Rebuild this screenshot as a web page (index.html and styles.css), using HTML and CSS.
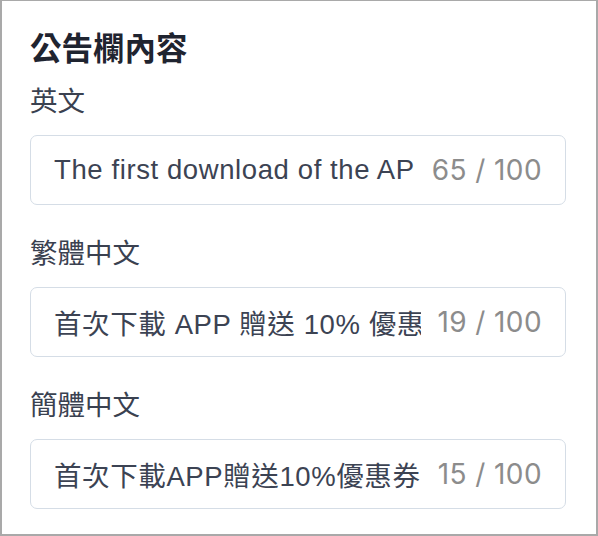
FILE: index.html
```html
<!DOCTYPE html>
<html>
<head>
<link rel="stylesheet" href="styles.css">
</head>
<body>

<div class="panel">
    <h2 class="panel-title">公告欄內容</h2>

    <div class="field">
        <p class="field-label">英文</p>
        <div class="field-box">
            <input type="text" class="field-input" value="The first download of the APP gives you a 10% discount coupon.">
            <span class="field-count">65 / 100</span>
        </div>
    </div>

    <div class="field">
        <p class="field-label">繁體中文</p>
        <div class="field-box">
            <input type="text" class="field-input" value="首次下載 APP 贈送 10% 優惠券">
            <span class="field-count">19 / 100</span>
        </div>
    </div>

    <div class="field">
        <p class="field-label">簡體中文</p>
        <div class="field-box">
            <input type="text" class="field-input" value="首次下載APP贈送10%優惠券">
            <span class="field-count">15 / 100</span>
        </div>
    </div>
</div>

</body>
</html>
```

FILE: styles.css
```css
body {
    margin: 0;
    padding: 0;
    background-color: #fff;
    font-family: Inter, "Noto Sans CJK TC", sans-serif;
}

.panel {
    box-sizing: border-box;
    width: 598px;
    height: 536px;
    border: 2px solid #a9a9a9;
    border-top-width: 1px;
    padding: 30px 30px 0 28px;
    background-color: white;
}

.panel-title {
    margin: 0 0 16px 0;
    height: 36px;
    line-height: 36px;
    font-size: 31.5px;
    font-weight: 700;
    color: #1f2430;
}

.field {
    margin-bottom: 30px;
}

.field-label {
    margin: 0 0 16px 0;
    height: 36px;
    line-height: 36px;
    font-size: 27.5px;
    color: #3a4150;
}

.field-box {
    box-sizing: border-box;
    display: flex;
    align-items: center;
    width: 536px;
    height: 70px;
    padding: 0 23px;
    border: 1.5px solid #d5dde6;
    border-radius: 7px;
    background-color: white;
}

.field-input {
    flex: 1;
    min-width: 0;
    padding: 0;
    margin: 0 16px 0 0;
    border: none;
    outline: none;
    background: transparent;
    font-family: "Liberation Sans", "Noto Sans CJK TC", sans-serif;
    font-size: 27.5px;
    letter-spacing: 0.6px;
    text-autospace: no-autospace;
    color: #3c4353;
}

.field-count {
    font-size: 28px;
    letter-spacing: 0.4px;
    color: #8c8c8c;
    white-space: nowrap;
}
```
